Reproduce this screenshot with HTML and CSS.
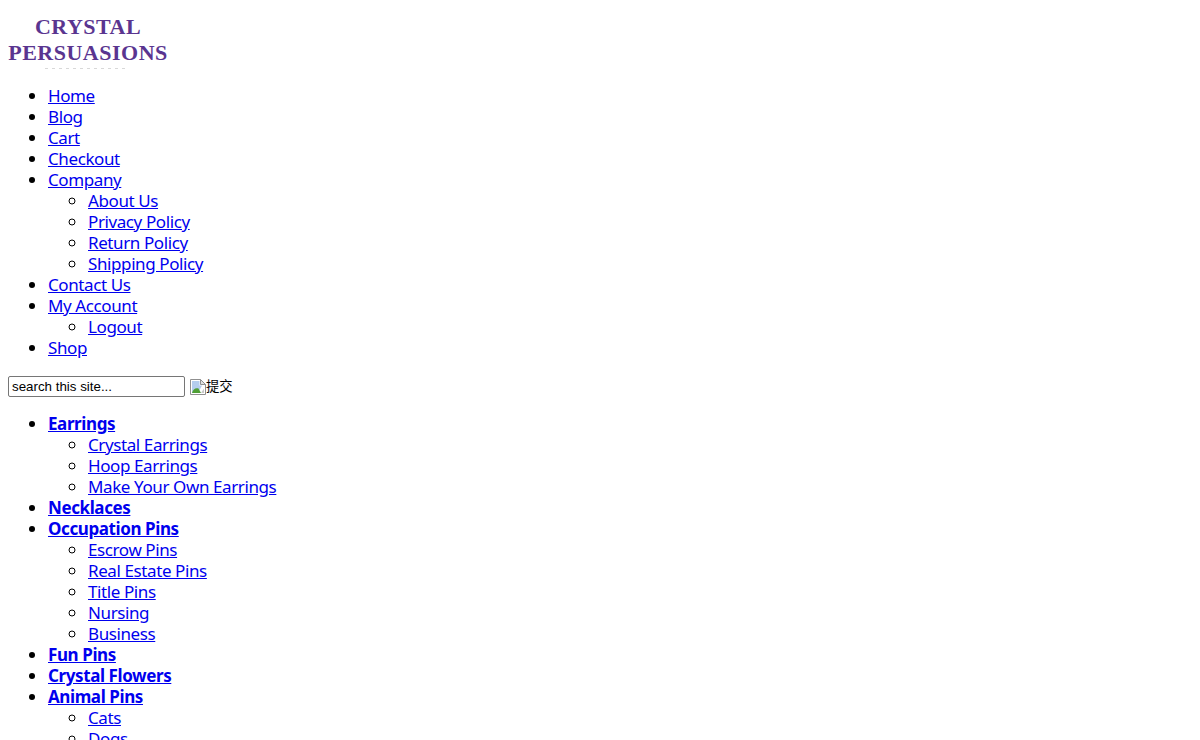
FILE: index.html
```html
<!DOCTYPE html>
<html lang="en">
<head>
<meta charset="utf-8">
<title>Crystal Persuasions</title>
<link rel="stylesheet" href="styles.css">
</head>
<body>
<div class="logo"><span class="logo-line">CRYSTAL</span><span class="logo-line">PERSUASIONS</span></div>
<ul class="menu">
  <li><a href="#">Home</a></li>
  <li><a href="#">Blog</a></li>
  <li><a href="#">Cart</a></li>
  <li><a href="#">Checkout</a></li>
  <li><a href="#">Company</a>
    <ul>
      <li><a href="#">About Us</a></li>
      <li><a href="#">Privacy Policy</a></li>
      <li><a href="#">Return Policy</a></li>
      <li><a href="#">Shipping Policy</a></li>
    </ul>
  </li>
  <li><a href="#">Contact Us</a></li>
  <li><a href="#">My Account</a>
    <ul>
      <li><a href="#">Logout</a></li>
    </ul>
  </li>
  <li><a href="#">Shop</a></li>
</ul>
<form class="search">
  <input class="search-input" type="text" value="search this site...">
  <span class="submit">
    <svg class="broken" width="16" height="16" viewBox="0 0 16 16" aria-hidden="true">
      <path d="M0.5 0.5H10.5L15.5 5.5V15.5H0.5Z" fill="#fff" stroke="#8f8f8f"/>
      <path d="M10.5 0.5V5.5H15.5Z" fill="#e0e0e0" stroke="#8f8f8f"/>
      <path d="M2 2H9.5V6.5H12L8 14H2Z" fill="#b4cdee"/>
      <path d="M2 14C3 9.5 6 8.5 8.5 9.5L11 14Z" fill="#4f9f35"/>
      <path d="M11 14 14 9.5V14Z" fill="#c8c8c8"/>
    </svg><span>提交</span>
  </span>
</form>
<ul class="menu cats">
  <li class="cat"><a href="#">Earrings</a>
    <ul>
      <li><a href="#">Crystal Earrings</a></li>
      <li><a href="#">Hoop Earrings</a></li>
      <li><a href="#">Make Your Own Earrings</a></li>
    </ul>
  </li>
  <li class="cat"><a href="#">Necklaces</a></li>
  <li class="cat"><a href="#">Occupation Pins</a>
    <ul>
      <li><a href="#">Escrow Pins</a></li>
      <li><a href="#">Real Estate Pins</a></li>
      <li><a href="#">Title Pins</a></li>
      <li><a href="#">Nursing</a></li>
      <li><a href="#">Business</a></li>
    </ul>
  </li>
  <li class="cat"><a href="#">Fun Pins</a></li>
  <li class="cat"><a href="#">Crystal Flowers</a></li>
  <li class="cat"><a href="#">Animal Pins</a>
    <ul>
      <li><a href="#">Cats</a></li>
      <li><a href="#">Dogs</a></li>
    </ul>
  </li>
</ul>
</body>
</html>
```
FILE: styles.css
```css
html {
  height: 740px;
  overflow: hidden;
  background: #fff;
}
body {
  margin: 8px;
  font-family: "Noto Sans", "Open Sans", sans-serif;
  font-size: 17px;
  line-height: 21px;
  letter-spacing: -0.4px;
  color: #000;
}
a {
  color: #0000ee;
}
.logo {
  display: flex;
  flex-direction: column;
  align-items: center;
  width: 160px;
  height: 64px;
  padding-top: 6px;
  box-sizing: border-box;
  font-family: "Liberation Serif", serif;
  font-size: 22px;
  font-weight: 700;
  line-height: 26px;
  letter-spacing: 0.5px;
  color: #5a3590;
}
.logo::after {
  content: "";
  display: block;
  width: 80px;
  height: 1px;
  margin: 2px 6px 0 0;
  background: repeating-linear-gradient(90deg, #d8d8d8 0 3px, #fff 3px 7px);
}
.logo-line {
  display: block;
  white-space: nowrap;
}
.menu {
  margin: 13px 0 0;
  padding: 0 0 0 40px;
  list-style: disc;
}
.menu ul {
  margin: 0;
  padding: 0 0 0 40px;
  list-style: circle;
}
.cats {
  margin-top: 16px;
}
.cat > a {
  font-weight: 700;
}
.search {
  display: flex;
  align-items: center;
  gap: 5px;
  margin-top: 18px;
  font-family: "Liberation Sans", "Noto Sans CJK SC", sans-serif;
  font-size: 13.33px;
  line-height: 15px;
  letter-spacing: 0;
}
.search-input {
  box-sizing: border-box;
  width: 177px;
  height: 21px;
  margin: 0;
  padding: 1px 3px;
  border: 1px solid #767676;
  border-radius: 2px;
  font: inherit;
  color: #000;
}
.submit {
  display: flex;
  align-items: center;
}
.broken {
  flex: none;
}
```
